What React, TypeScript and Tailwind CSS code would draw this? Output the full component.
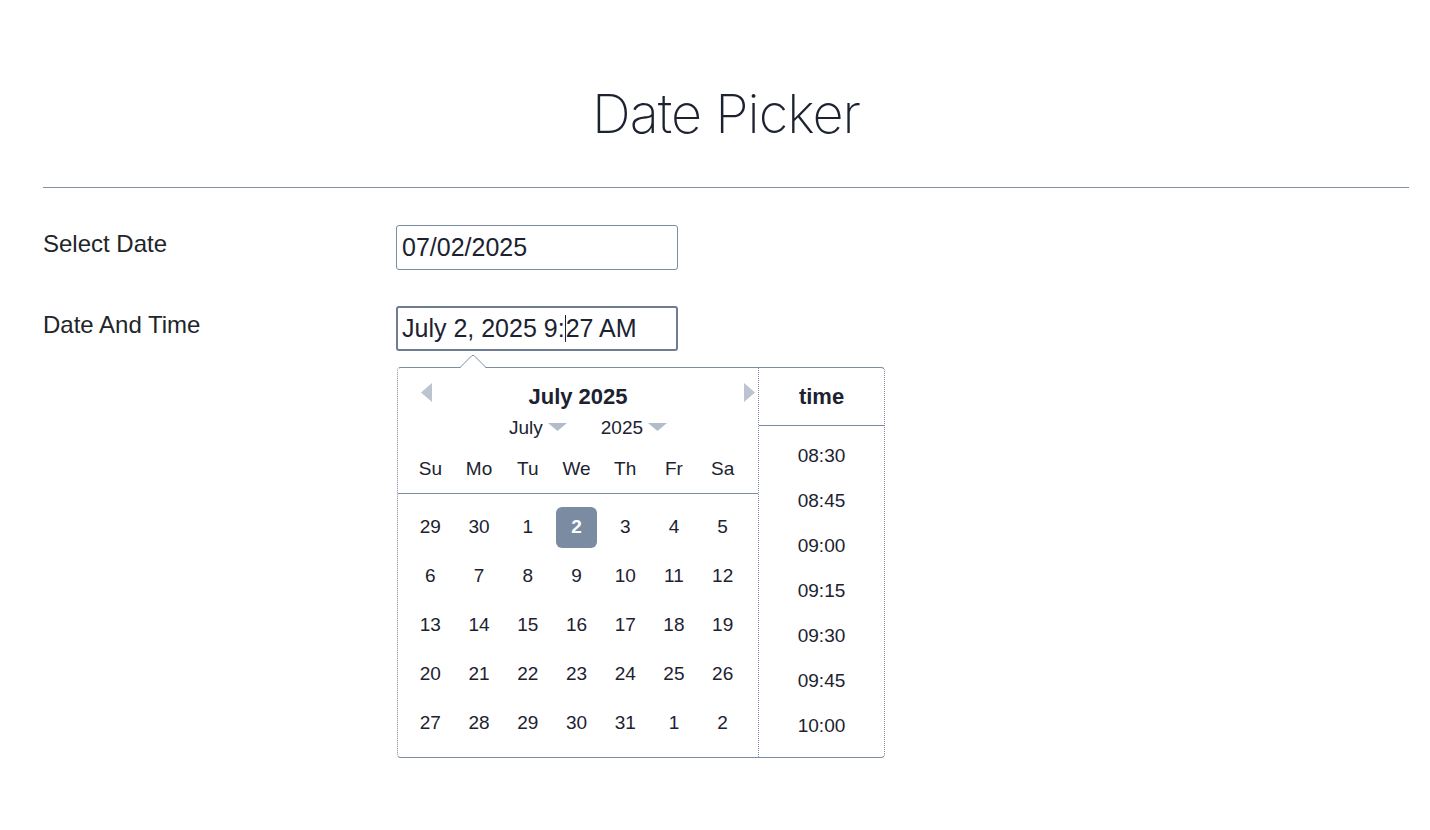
const weeks = [
  [29, 30, 1, 2, 3, 4, 5],
  [6, 7, 8, 9, 10, 11, 12],
  [13, 14, 15, 16, 17, 18, 19],
  [20, 21, 22, 23, 24, 25, 26],
  [27, 28, 29, 30, 31, 1, 2],
]

const dayNames = ['Su', 'Mo', 'Tu', 'We', 'Th', 'Fr', 'Sa']
const times = ['08:30', '08:45', '09:00', '09:15', '09:30', '09:45', '10:00']

const DownArrow = () => (
  <svg width="19" height="9" viewBox="0 0 19 9" className="ml-[5px] mt-[7px]">
    <polygon points="0,0 19,0 9.5,8" fill="#b3bcc9" />
  </svg>
)

const Calendar = () => {
  return (
    <div className="relative mt-[16px] ml-px flex w-[488px] h-[391px] rounded-[4px] border border-[#7d8ca3] [border-left-style:dotted] [border-right-style:dotted] bg-white font-['Liberation_Sans',Arial,sans-serif] text-[#1c2230]">
      {/* pointer */}
      <svg
        width="26"
        height="13"
        viewBox="0 0 26 13"
        className="absolute left-[62px] -top-[13px]"
      >
        <polyline points="0,12.5 12,0.5 14,0.5 26,12.5" fill="white" stroke="#7d8ca3" strokeWidth="1" />
        <rect x="1" y="12" width="24" height="2" fill="white" />
      </svg>

      {/* month */}
      <div className="w-[360px] flex flex-col">
        <div className="relative h-[126px] border-b border-[#7d8ca3] flex flex-col items-center">
          <svg width="11" height="19" viewBox="0 0 11 19" className="absolute left-[23px] top-[15px]">
            <polygon points="11,0 11,19 0,9.5" fill="#bcc4cf" />
          </svg>
          <svg width="11" height="19" viewBox="0 0 11 19" className="absolute left-[346px] top-[15px]">
            <polygon points="0,0 0,19 11,9.5" fill="#bcc4cf" />
          </svg>
          <div className="mt-[15px] h-[28px] leading-[28px] text-[22px] font-bold">July 2025</div>
          <div className="mt-[5px] ml-[20px] flex h-[24px] leading-[24px] text-[19px]">
            <div className="flex items-start">
              July
              <DownArrow />
            </div>
            <div className="ml-[34px] flex items-start">
              2025
              <DownArrow />
            </div>
          </div>
          <div className="mt-[17px] self-start ml-[8px] grid grid-cols-7 w-[341px] h-[24px] leading-[24px] text-[19px] text-center">
            {dayNames.map((d) => (
              <div key={d}>{d}</div>
            ))}
          </div>
        </div>
        <div className="pt-[9px] pl-[8px] flex flex-col">
          {weeks.map((w, i) => (
            <div key={i} className="grid grid-cols-7 w-[341px] h-[49px]">
              {w.map((d, j) => {
                const selected = i === 0 && d === 2
                return (
                  <div key={j} className="flex items-center justify-center">
                    <div
                      className={
                        selected
                          ? 'w-[41px] h-[41px] rounded-[6px] bg-[#7b8ba2] text-white font-bold text-[19px] flex items-center justify-center'
                          : 'w-[41px] h-[41px] text-[19px] flex items-center justify-center'
                      }
                    >
                      {d}
                    </div>
                  </div>
                )
              })}
            </div>
          ))}
        </div>
      </div>

      {/* time */}
      <div className="flex-1 border-l border-dotted border-[#7d8ca3] flex flex-col">
        <div className="h-[58px] border-b border-[#7d8ca3] flex items-center justify-center text-[22px] font-bold pb-[1px]">
          time
        </div>
        <div className="pt-[8px] flex flex-col">
          {times.map((t) => (
            <div key={t} className="h-[45px] flex items-center justify-center text-[19px]">
              {t}
            </div>
          ))}
        </div>
      </div>
    </div>
  )
}

const App = () => {
  return (
    <div className="min-h-[830px] bg-white pl-[43px] pr-[21px] text-[#212529] font-['Liberation_Sans',Arial,sans-serif]">
      <h1 className="pt-[81px] text-center text-[54px] leading-[66px] font-extralight tracking-[-1px] font-['Inter',sans-serif] text-[#1c2230]">
        Date Picker
      </h1>
      <hr className="mt-[40px] border-0 border-t border-[#8591a4]" />

      <div className="mt-[37px] flex items-start">
        <div className="w-[353px] text-[24px] leading-[36px] pt-px">Select Date</div>
        <div className="w-[282px] h-[45px] rounded-[3px] border border-[#7d8ca3] pl-[5px] flex items-center text-[25px] text-[#1c2230]">
          07/02/2025
        </div>
      </div>

      <div className="mt-[36px] flex items-start">
        <div className="w-[353px] text-[24px] leading-[36px] pt-px">Date And Time</div>
        <div>
          <div className="w-[282px] h-[45px] rounded-[3px] border-2 border-[#6f7d92] pl-[4px] flex items-center text-[25px] text-[#1c2230]">
            <span>July 2, 2025 9:</span>
            <span className="inline-block w-px h-[27px] bg-[#1c2230]" />
            <span>27 AM</span>
          </div>
          <Calendar />
        </div>
      </div>
    </div>
  )
}

export default App
